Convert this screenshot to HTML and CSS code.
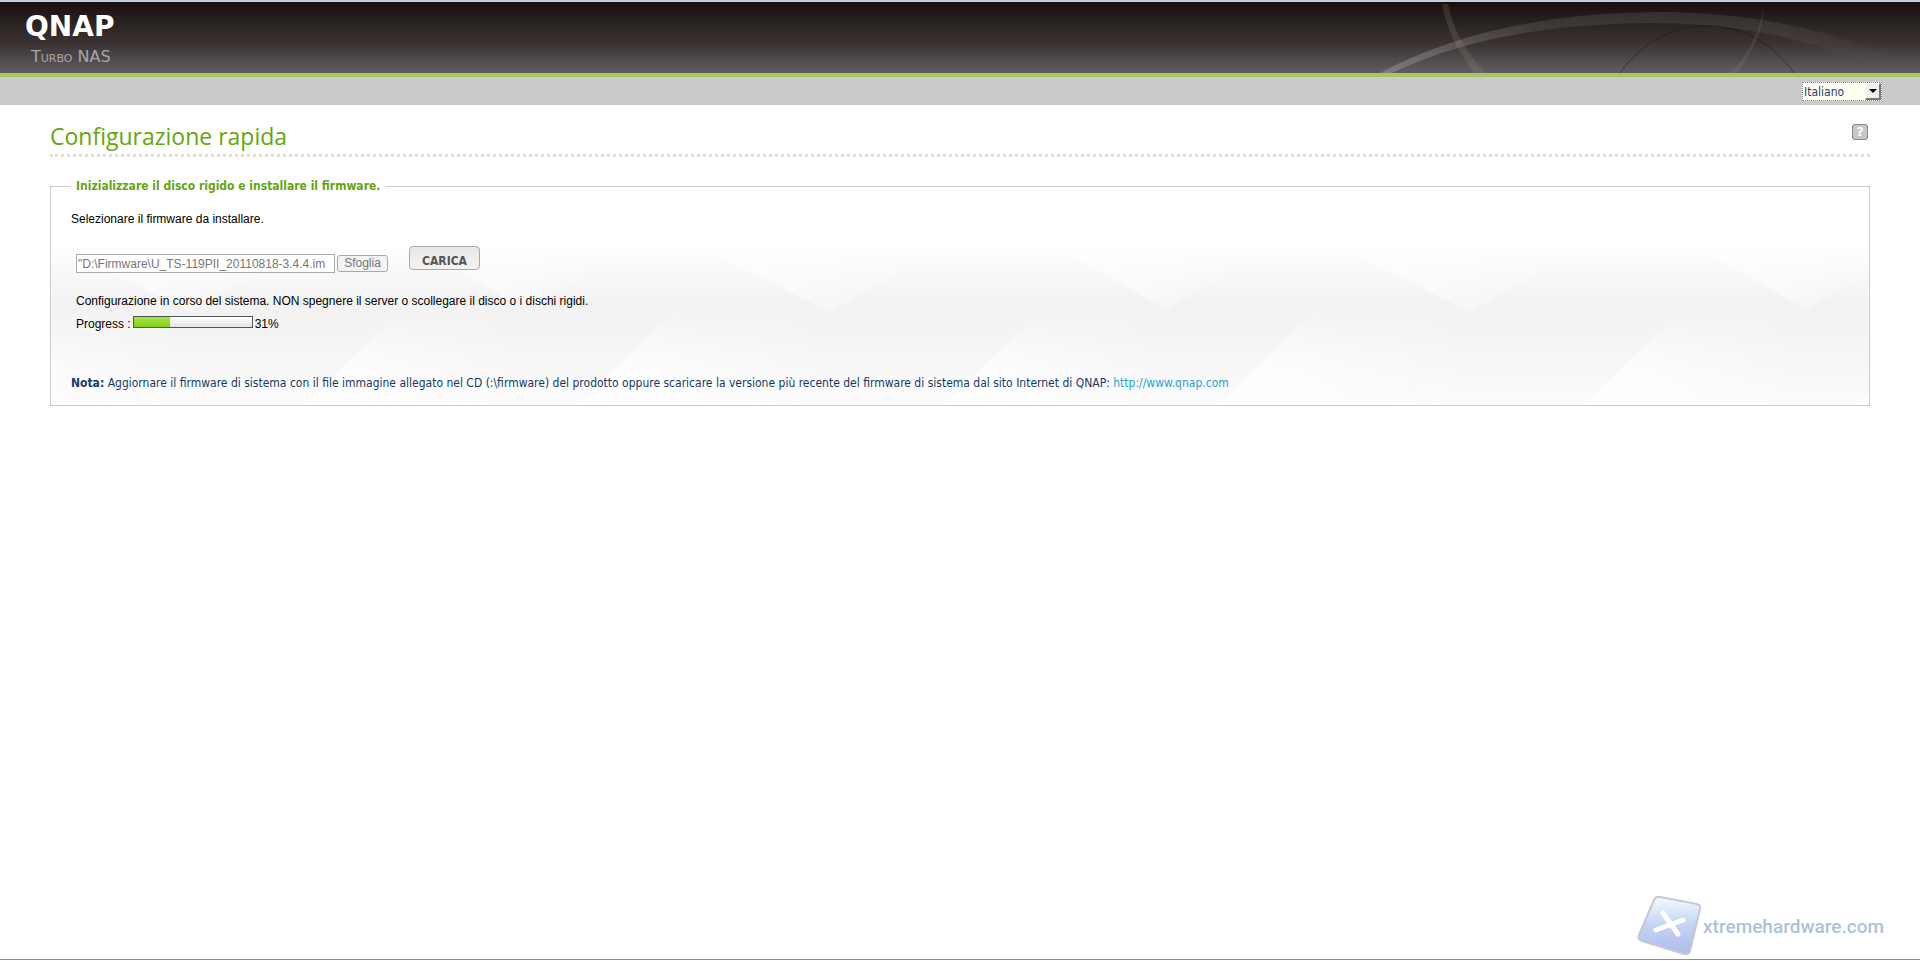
FILE: index.html
```html
<!DOCTYPE html>
<html lang="it">
<head>
  <meta charset="UTF-8">
  <meta name="viewport" content="width=device-width, initial-scale=1.0">
  <title>QNAP Turbo NAS</title>
  <link rel="stylesheet" href="styles.css">
</head>
<body>

  <header class="header">
    <div class="brand">
      <div class="logo">QNAP</div>
      <div class="product">Turbo NAS</div>
    </div>
    <svg class="header-art" width="560" height="71" viewBox="0 0 560 71" aria-hidden="true">
      <defs>
        <linearGradient id="arc" x1="0" x2="1" y1="0" y2="0">
          <stop offset="0" stop-color="#a09ca0" stop-opacity="0.5"/>
          <stop offset="0.3" stop-color="#777" stop-opacity="0.25"/>
          <stop offset="0.75" stop-color="#777" stop-opacity="0.2"/>
          <stop offset="1" stop-color="#777" stop-opacity="0"/>
        </linearGradient>
      </defs>
      <path d="M20 71C95 31 190 10 304 10C395 11 480 29 540 60L522 66C450 38 385 21 290 21C190 22 105 36 32 71Z" fill="url(#arc)"/>
      <path d="M82 2C86 25 97 48 114 71L125 71C105 48 93 28 88 2Z" fill="#b0b08c" opacity="0.16"/>
      <path d="M260 71C304 8 390 8 434 71" fill="none" stroke="#1c1414" stroke-width="1" opacity="0.5"/>
      <path d="M403 8C398 35 386 55 370 71L377 71C390 55 401 35 404 8Z" fill="#b0b08c" opacity="0.12"/>
    </svg>
  </header>

  <div class="toolbar">
    <div class="language">
      <select aria-label="Lingua">
        <option>Italiano</option>
        <option>English</option>
      </select>
      <span class="arrow"></span>
    </div>
  </div>

  <main class="content">
    <div class="title-row">
      <h1>Configurazione rapida</h1>
      <button class="help-btn" type="button" aria-label="Aiuto">?</button>
    </div>

    <fieldset class="panel">
      <legend>Inizializzare il disco rigido e installare il firmware.</legend>
      <svg class="panel-bg" width="100%" height="100%" aria-hidden="true">
        <defs>
          <linearGradient id="haze" x1="0" x2="0" y1="0" y2="1">
            <stop offset="0.22" stop-color="#f2f2f2" stop-opacity="0"/>
            <stop offset="0.5" stop-color="#f2f2f2"/>
            <stop offset="0.6" stop-color="#f3f3f3"/>
            <stop offset="1" stop-color="#fcfcfc"/>
          </linearGradient>
          <linearGradient id="valley" x1="0" x2="1" y1="0" y2="0">
            <stop offset="0" stop-color="#fff" stop-opacity="0.6"/>
            <stop offset="0.4" stop-color="#fff" stop-opacity="0.5"/>
            <stop offset="1" stop-color="#fff" stop-opacity="0"/>
          </linearGradient>
          <linearGradient id="slope" x1="0" x2="1" y1="0" y2="0">
            <stop offset="0.2" stop-color="#fff" stop-opacity="0.8"/>
            <stop offset="1" stop-color="#fff" stop-opacity="0"/>
          </linearGradient>
          <linearGradient id="fade" x1="0" x2="0" y1="110" y2="180" gradientUnits="userSpaceOnUse">
            <stop offset="0" stop-color="#fff" stop-opacity="0"/>
            <stop offset="1" stop-color="#fff"/>
          </linearGradient>
          <mask id="low" maskUnits="userSpaceOnUse" x="-120" y="0" width="900" height="218">
            <rect x="-120" width="900" height="218" fill="url(#fade)"/>
          </mask>
          <pattern id="ridges" width="640" height="218" patternUnits="userSpaceOnUse">
            <rect width="640" height="218" fill="url(#haze)"/>
            <path d="M21 60L140 118L240 60Z" fill="url(#valley)"/>
            <path d="M380 60L475 116L570 60Z" fill="url(#valley)"/>
            <g mask="url(#low)">
              <path d="M360 104L248 218H470V104Z" fill="url(#slope)"/>
              <path d="M636 104L521 218H780V104Z" fill="url(#slope)"/>
              <path d="M-4 104L-119 218H140V104Z" fill="url(#slope)"/>
            </g>
          </pattern>
        </defs>
        <rect width="100%" height="100%" fill="url(#ridges)"/>
      </svg>
      <label class="intro" for="firmware">Selezionare il firmware da installare.</label>
      <div class="upload-row">
        <input class="file-path" id="firmware" type="text" value='"D:\Firmware\U_TS-119PII_20110818-3.4.4.im' disabled>
        <button class="browse-btn" type="button" disabled>Sfoglia</button>
        <button class="upload-btn" type="button">CARICA</button>
      </div>
      <div class="status">
        <p>Configurazione in corso del sistema. NON spegnere il server o scollegare il disco o i dischi rigidi.</p>
        <div class="progress-row">
          <span>Progress :</span>
          <div class="progress"><div class="progress-bar" style="width: 31%"></div></div>
          <span>31%</span>
        </div>
      </div>
      <p class="note"><b>Nota:</b> Aggiornare il firmware di sistema con il file immagine allegato nel CD (:\firmware) del prodotto oppure scaricare la versione più recente del firmware di sistema dal sito Internet di QNAP: <a href="http://www.qnap.com">http://www.qnap.com</a></p>
    </fieldset>
  </main>

  <footer class="footer">
    <svg width="66" height="62" viewBox="0 0 66 62" aria-hidden="true">
      <defs>
        <linearGradient id="tile" x1="0" x2="0" y1="0" y2="1">
          <stop offset="0" stop-color="#f4faff"/>
          <stop offset="0.5" stop-color="#c3d3f2"/>
          <stop offset="1" stop-color="#b0b9ee"/>
        </linearGradient>
      </defs>
      <path d="M23 2L60 9Q64 10 63 14L53 56Q52 60 47 59L5 46Q0 44 2 40L17 5Q19 1 23 2Z" fill="url(#tile)" stroke="#c6c9d0" stroke-width="2"/>
      <path d="M26 18L41 39M46 25L19 35" stroke="#fff" stroke-width="5" stroke-linecap="round"/>
    </svg>
    <span class="watermark">xtremehardware.com</span>
  </footer>

</body>
</html>
```
FILE: styles.css
```css
* {
  box-sizing: border-box;
}

body {
  margin: 0;
  min-height: 100vh;
  display: flex;
  flex-direction: column;
  background-color: #fff;
  color: #000;
  font-family: "Liberation Sans", Arial, sans-serif;
  font-size: 12px;
}

h1, p {
  margin: 0;
}

.header {
  display: flex;
  justify-content: space-between;
  height: 77px;
  border-top: 2px solid #c4cfdc;
  border-bottom: 4px solid #a5c663;
  background: linear-gradient(#1a0d0d, #292421 30%, #3d3434 60%, #605d61);
}

.brand {
  padding: 10px 25px;
  font-family: "DejaVu Sans", Verdana, sans-serif;
}

.logo {
  color: #fff;
  font-size: 28px;
  font-weight: bold;
  line-height: 30px;
}

.product {
  margin-top: 7px;
  padding-left: 6px;
  color: #aaa5a8;
  font-size: 16px;
  font-variant: small-caps;
  line-height: 16px;
}

.toolbar {
  display: flex;
  justify-content: flex-end;
  align-items: flex-start;
  height: 28px;
  padding: 5px 38px 0 0;
  background-color: #cbcbcb;
}

.language {
  position: relative;
}

.language select {
  display: block;
  appearance: none;
  width: 80px;
  height: 19px;
  padding: 0 1px;
  border: 1px dotted #888;
  border-radius: 0;
  background: #fffff4;
  color: #1d3f66;
  font-family: "DejaVu Sans Condensed", Tahoma, sans-serif;
  font-size: 12px;
}

.arrow {
  position: absolute;
  top: 1px;
  right: 1px;
  width: 16px;
  height: 17px;
  border: 1px solid #fff;
  border-right: 2px solid #777;
  border-bottom: 2px solid #777;
  background-color: #f0f0f0;
  pointer-events: none;
}

.arrow::after {
  content: "";
  display: block;
  width: 0;
  margin: 5px auto 0;
  border: 4px solid transparent;
  border-top-color: #000;
  border-bottom: 0;
}

.content {
  flex: 1;
  padding: 16px 50px 0;
}

.title-row {
  display: flex;
  justify-content: space-between;
  height: 36px;
  border-bottom: 3px dotted #deded2;
}

h1 {
  color: #65a510;
  font-family: "Open Sans", "Trebuchet MS", sans-serif;
  font-size: 23px;
  font-weight: normal;
  line-height: 30px;
}

.help-btn {
  width: 16px;
  height: 16px;
  margin: 3px 2px 0 0;
  padding: 0;
  border: 1px solid #888;
  border-radius: 3px;
  background-color: #c6c6c6;
  color: #fff;
  font: bold 13px/14px "DejaVu Sans", sans-serif;
}

.panel {
  position: relative;
  min-width: 0;
  margin: 21px 0 0;
  padding: 17px 20px 14px;
  border: 1px solid #ccc;
}

.panel-bg {
  position: absolute;
  inset: 0;
  z-index: -1;
}

.panel legend {
  padding: 0 5px;
  color: #65a510;
  font-family: "DejaVu Sans Condensed", Tahoma, sans-serif;
  font-size: 12px;
  font-weight: bold;
  line-height: 16px;
}

.intro {
  display: block;
  line-height: 16px;
}

.upload-row {
  display: flex;
  align-items: flex-end;
  padding: 19px 5px 0;
}

.file-path {
  width: 259px;
  height: 19px;
  margin-right: 2px;
  padding: 0 1px;
  border: 1px solid #aaa;
  background-color: #fff;
  color: #777;
  font: 12px "Liberation Sans", Arial, sans-serif;
}

.browse-btn {
  width: 51px;
  height: 17px;
  margin-bottom: 1px;
  padding: 0;
  border: 1px solid #aaa;
  border-radius: 3px;
  background-color: #f3f3f3;
  color: #777;
  font: 12px/15px "Liberation Sans", Arial, sans-serif;
}

.upload-btn {
  width: 71px;
  height: 24px;
  margin: 0 0 3px 21px;
  padding: 6px 0 0;
  border: 1px solid #aaa;
  border-radius: 4px;
  background: linear-gradient(#e8e8e8, #f3f3f3);
  color: #555;
  font: bold 12px/16px "DejaVu Sans Condensed", Tahoma, sans-serif;
}

.status {
  padding: 20px 5px 0;
  line-height: 16px;
}

.progress-row {
  display: flex;
  gap: 2px;
  margin-top: 7px;
}

.progress {
  width: 120px;
  height: 12px;
  border: 1px solid #555;
  background: linear-gradient(#fff, #e4e4e4);
}

.progress-bar {
  height: 100%;
  background: linear-gradient(#a9e04f, #7fd00f);
}

.note {
  margin-top: 43px;
  color: #173a62;
  font-family: "DejaVu Sans Condensed", Tahoma, sans-serif;
  font-size: 12px;
  line-height: 16px;
}

.note a {
  color: #2b9fd0;
  text-decoration: none;
}

.footer {
  display: flex;
  justify-content: flex-end;
  align-items: center;
  margin-bottom: 1px;
  padding: 0 36px 2px 0;
  border-bottom: 1px solid #8c8f8f;
}

.watermark {
  color: #b0bfd9;
  font-family: Roboto, "Liberation Sans", sans-serif;
  font-size: 19px;
  font-weight: 500;
}
```
